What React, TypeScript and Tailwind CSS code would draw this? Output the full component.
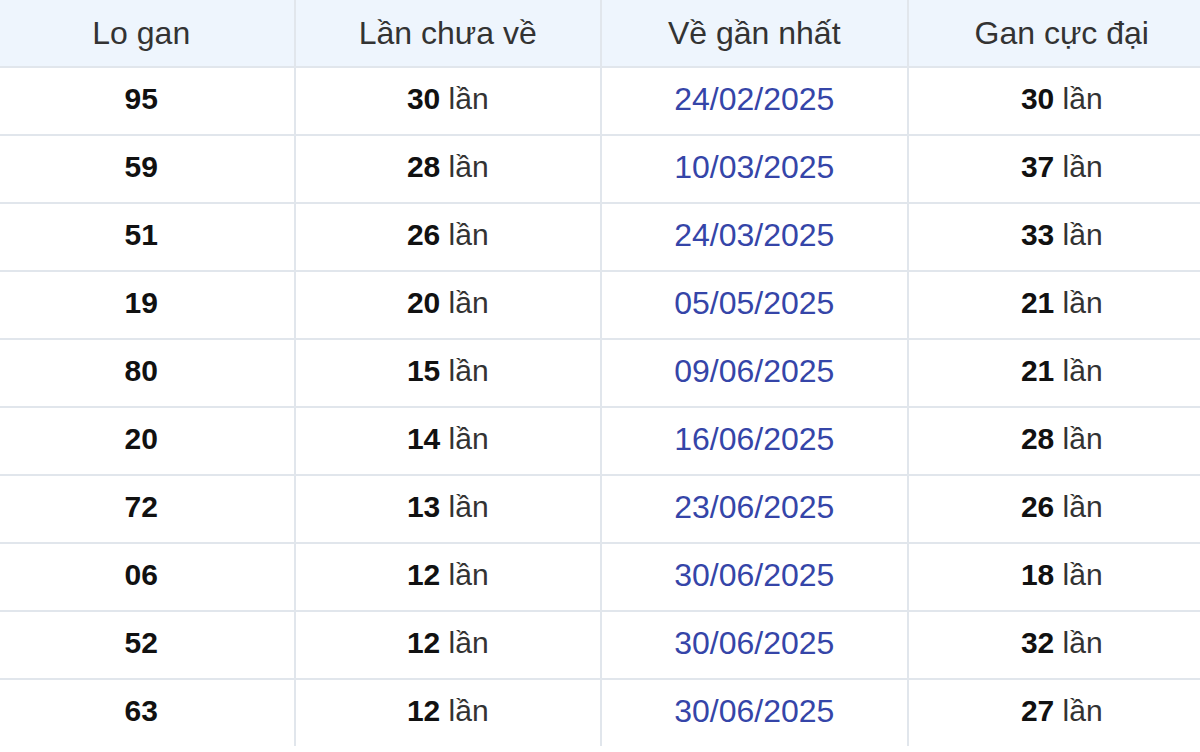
import React from 'react';

type Row = { lo: string; chua: number; ngay: string; max: number };

const rows: Row[] = [
  { lo: '95', chua: 30, ngay: '24/02/2025', max: 30 },
  { lo: '59', chua: 28, ngay: '10/03/2025', max: 37 },
  { lo: '51', chua: 26, ngay: '24/03/2025', max: 33 },
  { lo: '19', chua: 20, ngay: '05/05/2025', max: 21 },
  { lo: '80', chua: 15, ngay: '09/06/2025', max: 21 },
  { lo: '20', chua: 14, ngay: '16/06/2025', max: 28 },
  { lo: '72', chua: 13, ngay: '23/06/2025', max: 26 },
  { lo: '06', chua: 12, ngay: '30/06/2025', max: 18 },
  { lo: '52', chua: 12, ngay: '30/06/2025', max: 32 },
  { lo: '63', chua: 12, ngay: '30/06/2025', max: 27 },
];

const headers = ['Lo gan', 'Lần chưa về', 'Về gần nhất', 'Gan cực đại'];

const App: React.FC = () => {
  return (
    <div className="w-[1200px] h-[752px] overflow-hidden bg-white font-[family-name:'Liberation_Sans',Arial,sans-serif]">
      <div className="ml-[-11px] w-[1226px]">
        {/* header */}
        <div className="grid grid-cols-4 h-[68px] bg-[#eef5fd] border-b-2 border-[#e1e6ec]">
          {headers.map((h, i) => (
            <div
              key={h}
              className={`flex items-center justify-center text-[32px] text-[#333333] ${i < 3 ? 'border-r-2 border-[#e1e6ec]' : ''}`}
            >
              {h}
            </div>
          ))}
        </div>

        {rows.map((r, idx) => (
          <div
            key={r.lo}
            className={`grid grid-cols-4 ${idx < rows.length - 1 ? 'h-[68px] border-b-2 border-[#e1e6ec]' : 'h-[66px]'}`}
          >
            <div className="flex items-center justify-center pb-[5px] border-r-2 border-[#e1e6ec] text-[30px] font-bold text-[#111111]">
              {r.lo}
            </div>
            <div className="flex items-center justify-center pb-[5px] border-r-2 border-[#e1e6ec] text-[30px] text-[#333333]">
              <span className="font-bold text-[#111111]">{r.chua}</span>&nbsp;lần
            </div>
            <div className="flex items-center justify-center pb-[5px] border-r-2 border-[#e1e6ec] text-[32px] text-[#3545a8]">
              {r.ngay}
            </div>
            <div className="flex items-center justify-center pb-[5px] text-[30px] text-[#333333]">
              <span className="font-bold text-[#111111]">{r.max}</span>&nbsp;lần
            </div>
          </div>
        ))}
      </div>
    </div>
  );
};

export default App;
